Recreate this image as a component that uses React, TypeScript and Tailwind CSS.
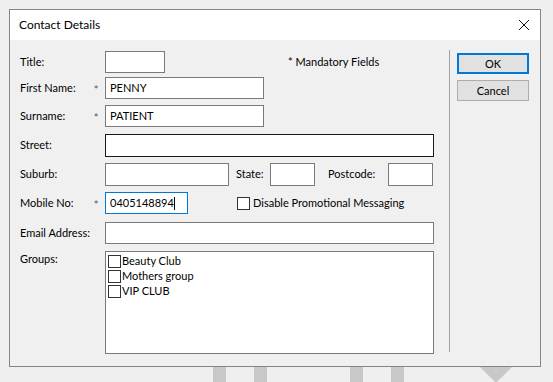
const groups = ["Beauty Club", "Mothers group", "VIP CLUB"];

function Box({ w, h = 22, border = "border-[#7a7a7a]", children }: { w: string; h?: number; border?: string; children?: React.ReactNode }) {
  return (
    <div className={`${w} ${h === 23 ? "h-[23px]" : "h-[22px]"} shrink-0 border ${border} bg-white flex items-center pl-[4px]`}>
      {children}
    </div>
  );
}

function Label({ text, star }: { text: string; star?: boolean }) {
  return (
    <>
      <span className="w-[67px] shrink-0 whitespace-nowrap">{text}</span>
      <span className="w-[18px] shrink-0 text-center text-[#555] mt-[4px]">{star ? "*" : ""}</span>
    </>
  );
}

function Check() {
  return <span className="w-[13px] h-[13px] shrink-0 border border-[#333] bg-white" />;
}

export default function App() {
  return (
    <div className="w-[553px] h-[382px] bg-[#efefef] overflow-hidden font-['Lato',sans-serif] text-[11px] text-black">
      <div className="pt-[9px] pl-[9px]">
        <div className="w-[532px] h-[358px] border border-[#858585] bg-[#f0f0f0] flex flex-col">
          {/* title bar */}
          <div className="h-[30px] bg-white flex items-center justify-between pl-[9px] pr-[10px] text-[12px]">
            <span>Contact Details</span>
            <svg width="12" height="12" viewBox="0 0 12 12">
              <path d="M1 1 L11 11 M11 1 L1 11" stroke="#111" strokeWidth="1" />
            </svg>
          </div>

          <div className="flex flex-1">
            {/* form */}
            <div className="w-[439px] pl-[10px] pt-[11px] flex flex-col">
              <div className="flex items-center h-[22px]">
                <Label text="Title:" />
                <Box w="w-[60px]" />
                <span className="ml-[123px] whitespace-nowrap">* Mandatory Fields</span>
              </div>
              <div className="flex items-center h-[22px] mt-[4px]">
                <Label text="First Name:" star />
                <Box w="w-[159px]">PENNY</Box>
              </div>
              <div className="flex items-center h-[22px] mt-[6px]">
                <Label text="Surname:" star />
                <Box w="w-[159px]">PATIENT</Box>
              </div>
              <div className="flex items-center h-[23px] mt-[7px]">
                <Label text="Street:" />
                <Box w="w-[329px]" h={23} border="border-[#1a1a1a]" />
              </div>
              <div className="flex items-center h-[23px] mt-[6px]">
                <Label text="Suburb:" />
                <Box w="w-[124px]" h={23} />
                <span className="ml-[7px] w-[34px]">State:</span>
                <Box w="w-[45px]" h={23} />
                <span className="ml-[13px] w-[60px]">Postcode:</span>
                <Box w="w-[45px]" h={23} />
              </div>
              <div className="flex items-center h-[22px] mt-[6px]">
                <Label text="Mobile No:" star />
                <Box w="w-[83px]" border="border-[#0078d7]">
                  <span>0405148894</span>
                  <span className="w-px h-[13px] bg-black" />
                </Box>
                <span className="ml-[49px] flex items-center gap-[3px] whitespace-nowrap">
                  <Check />
                  <span>Disable Promotional Messaging</span>
                </span>
              </div>
              <div className="flex items-center h-[22px] mt-[8px]">
                <Label text="Email Address:" />
                <Box w="w-[329px]" />
              </div>
              <div className="flex items-start mt-[7px]">
                <div className="flex">
                  <Label text="Groups:" />
                </div>
                <div className="w-[329px] h-[103px] border border-[#7a7a7a] bg-white pt-[2px] pl-[2px] flex flex-col">
                  {groups.map(g => (
                    <div key={g} className="flex items-center h-[15px] gap-[1px]">
                      <Check />
                      <span>{g}</span>
                    </div>
                  ))}
                </div>
              </div>
            </div>

            {/* separator */}
            <div className="w-px h-[302px] mt-[10px] bg-[#a0a0a0]" />

            {/* buttons */}
            <div className="pl-[7px] pt-[13px] flex flex-col gap-[6px]">
              <button className="w-[72px] h-[21px] border-2 border-[#0078d7] bg-[#e1e1e1] text-center leading-none">OK</button>
              <button className="w-[72px] h-[21px] border border-[#adadad] bg-[#e1e1e1] text-center leading-none">Cancel</button>
            </div>
          </div>
        </div>

        {/* background shapes peeking below the dialog */}
        <div className="flex h-[15px] items-start">
          <div className="ml-[204px] w-[13px] h-[15px] bg-[#c8c8c8]" />
          <div className="ml-[28px] w-[13px] h-[15px] bg-[#c8c8c8]" />
          <div className="ml-[83px] w-[13px] h-[15px] bg-[#c8c8c8]" />
          <div className="ml-[28px] w-[13px] h-[15px] bg-[#c8c8c8]" />
          <svg width="32" height="15" viewBox="0 0 32 15" className="ml-[76px]">
            <polygon points="0,0 32,0 16,16" fill="#c8c8c8" />
          </svg>
        </div>
      </div>
    </div>
  );
}
